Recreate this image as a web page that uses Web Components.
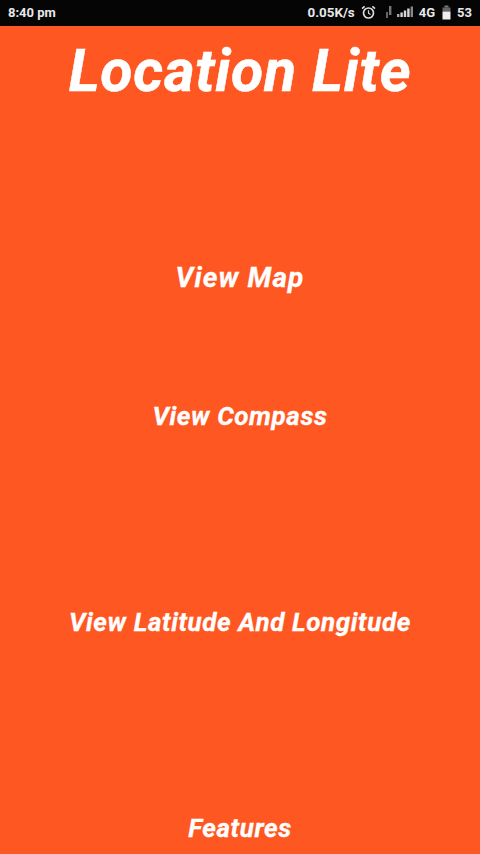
<!DOCTYPE html>
<html>
<head>
<meta charset="utf-8">
<title>Location Lite</title>
<style>
    html, body {
        margin: 0;
        height: 854px;
        overflow: hidden;
        background: #ff5722;
    }
</style>
</head>
<body>
<location-app>
    <status-bar slot="status"></status-bar>
    <app-title slot="title">Location Lite</app-title>
    <menu-item style="--row: 139px; --size: 28px; --track: 1.1px">View Map</menu-item>
    <menu-item style="--row: 206px">View Compass</menu-item>
    <menu-item style="--row: 206px">View Latitude And Longitude</menu-item>
    <menu-item style="--row: 52px">Features</menu-item>
</location-app>

<script>
class StatusBar extends HTMLElement {
    constructor() {
        super();
        this.attachShadow({ mode: 'open' });
    }

    connectedCallback() {
        this.shadowRoot.innerHTML = `
        <style>
            :host {
                display: flex;
                align-items: center;
                height: 26px;
                padding: 0 8px 2px 8px;
                box-sizing: border-box;
                background: #050505;
                color: #e8e8e8;
                font: 700 13px Roboto, sans-serif;
            }
            .time { flex: 1; }
            .right { display: flex; align-items: center; }
            svg { display: block; }
            .speed { margin-right: 6px; font-size: 13.4px; }
            .clock { margin-right: 9px; }
            .data { margin-right: 4px; }
            .bars { margin-right: 5px; }
            .net { margin-right: 7px; }
            .batt { margin-right: 6px; }
        </style>
        <span class="time">8:40 pm</span>
        <div class="right">
            <span class="speed">0.05K/s</span>
            <svg class="clock" width="15" height="15" viewBox="0 0 15 15" fill="none" stroke="#ddd">
                <circle cx="7.5" cy="8" r="5" stroke-width="1.7"/>
                <path d="M7.5 5.2v3l2 1.2" stroke-width="1.2"/>
                <path d="M1 3.6 3.6 1.4M14 3.6l-2.6-2.2" stroke-width="1.6"/>
            </svg>
            <svg class="data" width="8" height="14" viewBox="0 0 8 14" fill="#666">
                <rect x="1" y="7" width="2" height="6"/>
                <rect x="4" y="1" width="2.4" height="9" fill="#777"/>
            </svg>
            <svg class="bars" width="17" height="12" viewBox="0 0 17 12" fill="#d8d8d8">
                <rect x="0" y="8" width="2.4" height="3" fill="#aaa"/>
                <rect x="3.4" y="6.5" width="2.4" height="4.5"/>
                <rect x="6.8" y="4.5" width="2.4" height="6.5"/>
                <rect x="10.2" y="2.5" width="2.4" height="8.5"/>
                <rect x="13.6" y="0.5" width="2.4" height="10.5" fill="#888"/>
            </svg>
            <span class="net">4G</span>
            <svg class="batt" width="9" height="15" viewBox="0 0 9 15">
                <rect x="2.5" y="0.5" width="4" height="2" fill="#777"/>
                <rect x="0.5" y="2.5" width="8" height="4" fill="#666"/>
                <rect x="0.5" y="6.5" width="8" height="8" fill="#eee"/>
            </svg>
            <span>53</span>
        </div>
        `;
    }
}

class AppTitle extends HTMLElement {
    constructor() {
        super();
        this.attachShadow({ mode: 'open' });
    }

    connectedCallback() {
        this.shadowRoot.innerHTML = `
        <style>
            :host {
                display: block;
                height: 92px;
                text-align: center;
                color: #fff;
                letter-spacing: .7px;
                -webkit-text-stroke: .5px #fff;
                font: italic 700 59px/90px Roboto, sans-serif;
            }
        </style>
        <slot></slot>
        `;
    }
}

class MenuItem extends HTMLElement {
    constructor() {
        super();
        this.attachShadow({ mode: 'open' });
    }

    connectedCallback() {
        this.shadowRoot.innerHTML = `
        <style>
            :host {
                display: flex;
                align-items: center;
                justify-content: center;
                height: 52px;
                margin-bottom: calc(var(--row) - 52px);
                color: #fff;
                -webkit-text-stroke: .3px #fff;
                font: italic 700 var(--size, 26px) Roboto, sans-serif;
                letter-spacing: var(--track, .6px);
            }
        </style>
        <slot></slot>
        `;
    }
}

class LocationApp extends HTMLElement {
    constructor() {
        super();
        this.attachShadow({ mode: 'open' });
    }

    connectedCallback() {
        this.shadowRoot.innerHTML = `
        <style>
            :host {
                display: block;
                height: 854px;
                background: #ff5722;
            }
            main {
                display: flex;
                flex-direction: column;
                padding-top: 133px;
            }
        </style>
        <slot name="status"></slot>
        <slot name="title"></slot>
        <main><slot></slot></main>
        `;
    }
}

customElements.define('status-bar', StatusBar);
customElements.define('app-title', AppTitle);
customElements.define('menu-item', MenuItem);
customElements.define('location-app', LocationApp);
</script>
</body>
</html>
